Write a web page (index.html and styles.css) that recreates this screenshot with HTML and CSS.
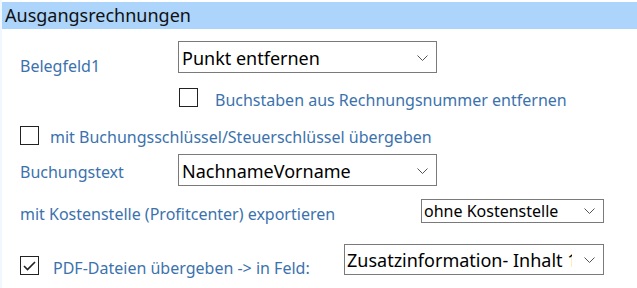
FILE: index.html
```html
<!DOCTYPE html>
<html lang="de">
<head>
    <meta charset="UTF-8">
    <title>Ausgangsrechnungen</title>
    <link rel="stylesheet" href="styles.css">
</head>
<body>
    <div class="panel">
        <div class="panel-title">Ausgangsrechnungen</div>
        <div class="form">
            <div class="row row-beleg">
                <span class="label label-wide">Belegfeld1</span>
                <div class="dropdown dd-large">
                    <span class="dd-text">Punkt entfernen</span>
                    <svg class="chevron" width="11" height="6" viewBox="0 0 11 6"><path d="M0.5 0.5 L5.5 5.5 L10.5 0.5" fill="none" stroke="#555" stroke-width="1"/></svg>
                </div>
            </div>
            <div class="row row-buchstaben">
                <span class="check"></span>
                <span class="label">Buchstaben aus Rechnungsnummer entfernen</span>
            </div>
            <div class="row row-schluessel">
                <span class="check"></span>
                <span class="label">mit Buchungsschlüssel/Steuerschlüssel übergeben</span>
            </div>
            <div class="row row-text">
                <span class="label label-wide">Buchungstext</span>
                <div class="dropdown dd-large">
                    <span class="dd-text">NachnameVorname</span>
                    <svg class="chevron" width="11" height="6" viewBox="0 0 11 6"><path d="M0.5 0.5 L5.5 5.5 L10.5 0.5" fill="none" stroke="#555" stroke-width="1"/></svg>
                </div>
            </div>
            <div class="row row-kosten">
                <span class="label label-kosten">mit Kostenstelle (Profitcenter) exportieren</span>
                <div class="dropdown dd-small">
                    <span class="dd-text">ohne Kostenstelle</span>
                    <svg class="chevron" width="11" height="6" viewBox="0 0 11 6"><path d="M0.5 0.5 L5.5 5.5 L10.5 0.5" fill="none" stroke="#555" stroke-width="1"/></svg>
                </div>
            </div>
            <div class="row row-pdf">
                <span class="check checked">
                    <svg width="13" height="10" viewBox="0 0 13 10"><path d="M1 5 L4.5 8.5 L12 1" fill="none" stroke="#222" stroke-width="1.6"/></svg>
                </span>
                <span class="label label-pdf">PDF-Dateien übergeben -&gt; in Feld:</span>
                <div class="dropdown dd-pdf">
                    <span class="dd-text">Zusatzinformation- Inhalt 1</span>
                    <svg class="chevron" width="11" height="6" viewBox="0 0 11 6"><path d="M0.5 0.5 L5.5 5.5 L10.5 0.5" fill="none" stroke="#555" stroke-width="1"/></svg>
                </div>
            </div>
        </div>
    </div>
</body>
</html>
```

FILE: styles.css
```css
body {
    margin: 0;
    background-color: #fff;
    font-family: "Noto Sans", "Open Sans", sans-serif;
}
.panel {
    height: 288px;
    border-left: 2px solid #f1f7fe;
    box-sizing: border-box;
    padding-top: 2px;
}
.panel-title {
    background-color: #add4fb;
    height: 27px;
    line-height: 26px;
    padding-left: 3px;
    font-size: 18px;
    color: #111;
}
.form {
    padding-left: 18px;
}
.row {
    display: flex;
    align-items: center;
}
.label {
    font-size: 16px;
    line-height: 20px;
    color: #3b72ad;
}
.label-wide {
    width: 158px;
}
.label-kosten {
    width: 401px;
    margin-top: 6px;
}
.label-pdf {
    width: 291px;
    margin-left: 14px;
}
.row-beleg {
    margin-top: 12px;
    height: 32px;
}
.row-beleg .label {
    margin-top: 18px;
}
.row-buchstaben {
    margin-top: 15px;
    margin-left: 159px;
    height: 19px;
}
.row-buchstaben .label {
    margin-left: 17px;
    margin-top: 4px;
}
.row-schluessel {
    margin-top: 19px;
    height: 19px;
}
.row-schluessel .label {
    margin-left: 11px;
    margin-top: 2px;
}
.row-text {
    margin-top: 9px;
    height: 32px;
}
.row-text .label {
    margin-top: 3px;
}
.row-kosten {
    margin-top: 13px;
    height: 24px;
}
.row-pdf {
    margin-top: 21px;
    height: 31px;
}
.check {
    width: 19px;
    height: 19px;
    box-sizing: border-box;
    border: 1px solid #222;
    display: flex;
    align-items: center;
    justify-content: center;
    flex-shrink: 0;
}
.row-pdf .check {
    margin-top: 12px;
}
.row-pdf .label {
    margin-top: 16px;
}
.dropdown {
    display: flex;
    align-items: center;
    box-sizing: border-box;
    border: 1px solid #7a7a7a;
    background-color: #fff;
    overflow: hidden;
    color: #000;
}
.dd-text {
    flex: 1;
    white-space: nowrap;
    overflow: hidden;
}
.chevron {
    flex-shrink: 0;
}
.dd-large {
    width: 259px;
    height: 32px;
    padding: 1px 8px 0 3px;
    font-size: 18px;
}
.dd-small {
    width: 183px;
    height: 24px;
    padding: 0 8px 0 2px;
    font-size: 16px;
}
.dd-pdf {
    width: 260px;
    height: 31px;
    padding: 0 8px 0 2px;
    font-size: 18px;
}
.dd-pdf .dd-text {
    margin-right: 12px;
}
```
